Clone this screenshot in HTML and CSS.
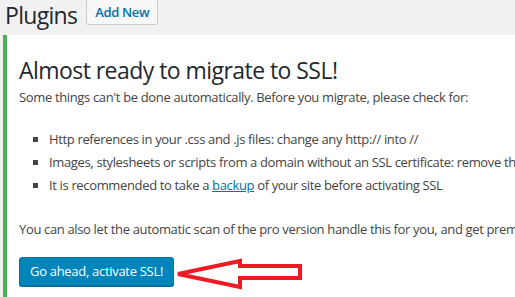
FILE: index.html
```html
<!DOCTYPE html>
<html>
<head>
<meta charset="utf-8">
<link rel="stylesheet" href="styles.css">
</head>
<body>
<div class="header">
  <h1 class="title">Plugins</h1>
  <a class="add-new">Add New</a>
</div>
<div class="notice">
  <h2 class="notice-title">Almost ready to migrate to SSL!</h2>
  <p class="intro">Some things can't be done automatically. Before you migrate, please check for:</p>
  <ul class="checks">
    <li>Http references in your .css and .js files: change any http:// into //</li>
    <li>Images, stylesheets or scripts from a domain without an SSL certificate: remove them or move to your own server.</li>
    <li>It is recommended to take a <a class="link">backup</a> of your site before activating SSL</li>
  </ul>
  <p class="pro">You can also let the automatic scan of the pro version handle this for you, and get premium support and increased security with HSTS included.</p>
  <div class="actions">
    <a class="primary">Go ahead, activate SSL!</a>
    <svg class="arrow" width="132" height="36" viewBox="0 0 132 36">
      <polygon points="4,17 66,4 66,9 126,9 126,21 66,21 66,30" fill="none" stroke="#ed1c24" stroke-width="4" stroke-linejoin="miter"/>
    </svg>
  </div>
</div>
</body>
</html>
```
FILE: styles.css
```css
html, body {
  margin: 0;
  padding: 0;
}
body {
  background: #f1f1f1;
  font-family: "Open Sans", "Noto Sans", sans-serif;
  color: #444;
  font-size: 13px;
  letter-spacing: -0.35px;
  overflow: hidden;
  width: 515px;
  height: 297px;
}
.header {
  display: flex;
  align-items: flex-start;
  height: 35px;
  padding-left: 5px;
}
.title {
  margin: 0;
  font-size: 23px;
  font-weight: 400;
  line-height: 29px;
  letter-spacing: -0.7px;
  color: #23282d;
  margin-top: 1px;
}
.add-new {
  margin-left: 9px;
  margin-top: -1px;
  height: 24px;
  line-height: 24px;
  padding: 0 8px;
  border: 1px solid #ccc;
  border-radius: 2px;
  background: #f7f7f7;
  color: #0073aa;
  font-size: 13px;
  font-weight: 600;
}
.notice {
  background: #fff;
  border-left: 4px solid #46b450;
  margin-left: 3px;
  padding: 1px 12px 20px;
  white-space: nowrap;
  overflow: hidden;
}
.notice-title {
  margin: 20px 0 0;
  font-size: 23px;
  font-weight: 400;
  line-height: 29px;
  letter-spacing: -0.55px;
  color: #23282d;
}
.intro {
  margin: 2px 0 0;
  line-height: 20px;
}
.checks {
  margin: 22px 0 0;
  padding-left: 30px;
  list-style: square;
}
.checks li {
  line-height: 20px;
  margin-bottom: 3px;
}
.link {
  color: #0073aa;
  text-decoration: underline;
}
.pro {
  margin: 24px 0 0;
  line-height: 20px;
}
.actions {
  display: flex;
  align-items: flex-start;
  margin-top: 18px;
}
.primary {
  display: block;
  height: 27px;
  line-height: 27px;
  padding: 0 10px;
  background: #0085ba;
  border: 1px solid #0073aa;
  border-radius: 3px;
  box-shadow: 0 1px 0 #006799;
  color: #fff;
  font-size: 13px;
  letter-spacing: -0.3px;
}
.arrow {
  margin-left: 0;
}
```
